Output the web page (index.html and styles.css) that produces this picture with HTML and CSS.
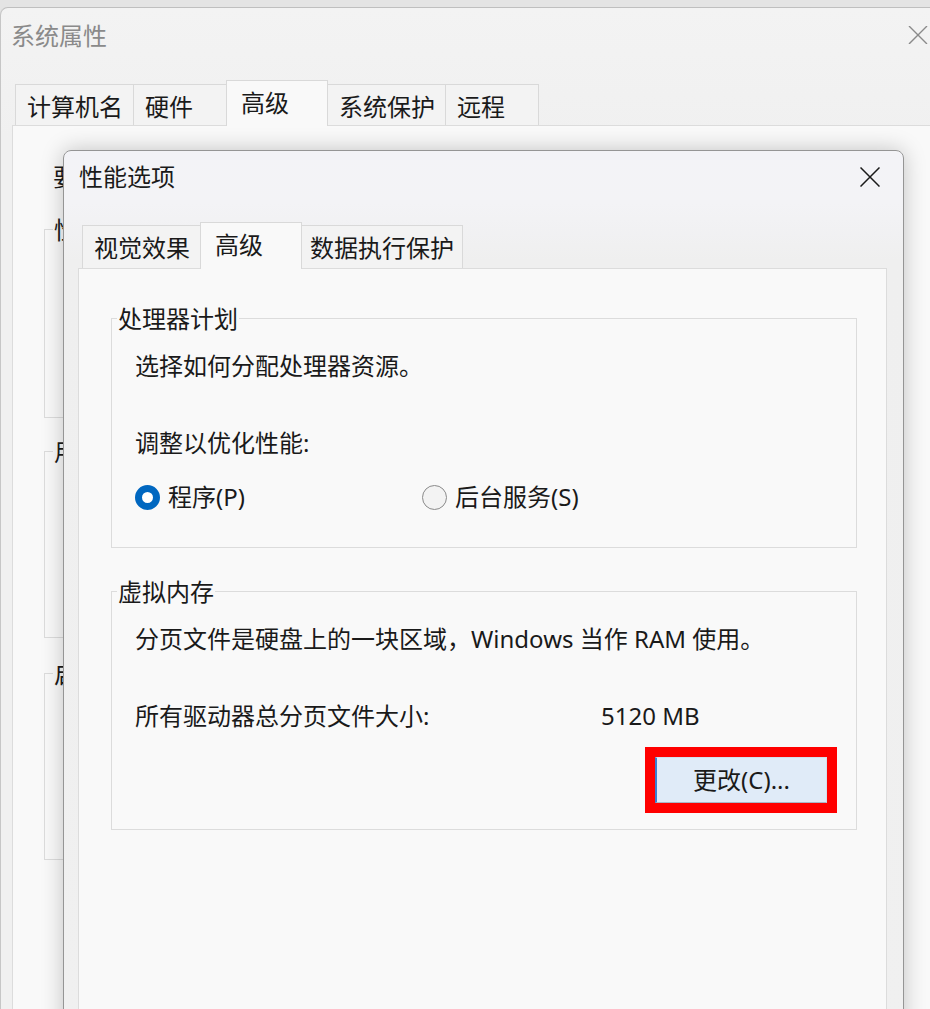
FILE: index.html
```html
<!DOCTYPE html>
<html lang="zh-CN">
<head>
    <meta charset="utf-8">
    <title>性能选项</title>
    <link rel="stylesheet" href="styles.css">
</head>
<body>

<!-- Back window: 系统属性 -->
<div class="window sysprops">
    <div class="titlebar">
        <span class="title">系统属性</span>
        <svg class="close" width="20" height="18" viewBox="0 0 20 18">
            <path d="M1 0 L19 18 M19 0 L1 18" stroke="#8a8a8a" stroke-width="1.4" fill="none"/>
        </svg>
    </div>
    <div class="tabs">
        <div class="tab">计算机名</div>
        <div class="tab">硬件</div>
        <div class="tab active">高级</div>
        <div class="tab">系统保护</div>
        <div class="tab">远程</div>
    </div>
    <div class="panel">
        <div class="note">要进行大多数更改，你必须作为管理员登录。</div>
        <div class="group back-group">
            <span class="group-title">性能</span>
        </div>
        <div class="group back-group">
            <span class="group-title">用户配置文件</span>
        </div>
        <div class="group back-group">
            <span class="group-title">启动和故障恢复</span>
        </div>
    </div>
</div>

<!-- Front dialog: 性能选项 -->
<div class="window perf">
    <div class="titlebar">
        <span class="title">性能选项</span>
        <svg class="close" width="20" height="20" viewBox="0 0 20 20">
            <path d="M0.5 0.5 L19.5 19.5 M19.5 0.5 L0.5 19.5" stroke="#1a1a1a" stroke-width="1.5" fill="none"/>
        </svg>
    </div>
    <div class="tabs">
        <div class="tab">视觉效果</div>
        <div class="tab active">高级</div>
        <div class="tab narrow">数据执行保护</div>
    </div>
    <div class="panel">
        <div class="group cpu">
            <span class="group-title">处理器计划</span>
            <div class="line first">选择如何分配处理器资源。</div>
            <div class="line spaced">调整以优化性能:</div>
            <div class="radios">
                <label class="radio-item">
                    <span class="radio checked"></span>
                    <span>程序(P)</span>
                </label>
                <label class="radio-item">
                    <span class="radio"></span>
                    <span>后台服务(S)</span>
                </label>
            </div>
        </div>

        <div class="group vmem">
            <span class="group-title">虚拟内存</span>
            <div class="line first">分页文件是硬盘上的一块区域，Windows 当作 RAM 使用。</div>
            <div class="line spaced size-row">
                <span class="size-label">所有驱动器总分页文件大小:</span>
                <span>5120 MB</span>
            </div>
            <div class="button-row">
                <button type="button" class="change">更改(C)...</button>
            </div>
        </div>
    </div>
</div>

</body>
</html>
```

FILE: styles.css
```css
/* Base */
* {
    box-sizing: border-box;
}
html, body {
    margin: 0;
}
body {
    position: relative;
    width: 930px;
    height: 1009px;
    overflow: hidden;
    background: #e4e4e4;
    font-family: "Noto Sans", "Noto Sans CJK SC", sans-serif;
    font-size: 24px;
    color: #1a1a1a;
}

/* Window frames */
.window {
    display: flex;
    flex-direction: column;
}
.titlebar {
    display: flex;
    align-items: center;
    justify-content: space-between;
    flex: none;
}
.close {
    display: block;
}

.sysprops {
    margin-top: 7px;
    width: 934px;
    height: 1010px;
    background: linear-gradient(#f3f3f3, #f0f0f0 130px);
    border-top: 1px solid #bfbfbf;
    border-left: 1px solid #c6c6c6;
    border-top-left-radius: 8px;
}
.sysprops .titlebar {
    height: 56px;
    padding: 0 6px 3px 10px;
}
.sysprops .title {
    color: #8a8a8a;
}

.perf {
    position: absolute;
    left: 63px;
    top: 150px;
    width: 841px;
    height: 900px;
    border: 1px solid #959595;
    border-radius: 8px 8px 0 0;
    background: linear-gradient(#f3f3f7, #f3f3f6 52px, #efefef 110px, #f0f0f0);
    box-shadow: 0 0 22px rgba(0, 0, 0, 0.22);
}
.perf .titlebar {
    height: 52px;
    padding: 0 23px 3px 15px;
}
.perf .close {
    margin-top: 3px;
}

/* Tabs */
.tabs {
    display: flex;
    align-items: flex-end;
    flex: none;
}
.tab {
    position: relative;
    min-width: 94px;
    padding: 0 10px 0 11px;
    border: 1px solid #d9d9d9;
    border-bottom: none;
    background: #f3f3f3;
    white-space: nowrap;
}
.tab + .tab {
    margin-left: -1px;
}
.tab.active {
    z-index: 1;
    min-width: 102px;
    padding-left: 14px;
    background: #f9f9f9;
    margin-bottom: -1px;
}
.tab.narrow {
    padding: 0 8px;
}

.sysprops .tabs {
    height: 45px;
    margin: 16px 0 0 14px;
}
.sysprops .tab {
    height: 41px;
    line-height: 43px;
}
.sysprops .tab.active {
    height: 46px;
    line-height: 44px;
}

.perf .tabs {
    height: 46px;
    margin: 19px 0 0 18px;
}
.perf .tab {
    height: 43px;
    line-height: 43px;
}
.perf .tab.active {
    height: 47px;
    line-height: 44px;
}

/* Tab panels */
.panel {
    flex: 1;
    border: 1px solid #dcdcdc;
    background: #f9f9f9;
}
.sysprops .panel {
    margin-left: 11px;
    padding: 35px 0 0 31px;
}
.perf .panel {
    margin: 0 16px 0 14px;
    padding: 0 29px 0 32px;
}

.note {
    line-height: 32px;
    padding-left: 9px;
}

/* Group boxes */
.group {
    border: 1px solid #dcdcdc;
    padding: 0 29px 0 23px;
}
.group-title {
    display: block;
    width: max-content;
    margin: -14px 0 0 -18px;
    padding: 0 1px;
    line-height: 28px;
    background: #f9f9f9;
}

.back-group {
    width: 820px;
    height: 187px;
    padding-left: 8px;
}
.back-group .group-title {
    margin-left: 0;
}
.note + .back-group {
    margin-top: 36px;
    height: 189px;
}
.back-group + .back-group {
    margin-top: 33px;
}
.back-group:last-child {
    margin-top: 35px;
}

.cpu {
    margin-top: 49px;
    padding-bottom: 34px;
}
.vmem {
    margin-top: 43px;
    padding-bottom: 26px;
}

.line {
    line-height: 32px;
}
.line.first {
    margin-top: 17px;
}
.line.spaced {
    margin-top: 45px;
}

/* Radio buttons */
.radios {
    display: flex;
    margin-top: 22px;
    line-height: 32px;
}
.radio-item {
    display: flex;
    align-items: center;
    gap: 8px;
}
.radio-item:first-child {
    width: 287px;
}
.radio {
    width: 25px;
    height: 25px;
    border-radius: 50%;
    border: 1px solid #8a8a8a;
    background: #f3f3f3;
}
.radio.checked {
    border: 7px solid #0067c0;
    background: #fff;
}

/* Page file size */
.size-row {
    display: flex;
}
.size-label {
    width: 466px;
}

.button-row {
    display: flex;
    justify-content: flex-end;
    margin-top: 25px;
}
button.change {
    width: 172px;
    height: 46px;
    padding: 0;
    font: inherit;
    color: #1a1a1a;
    background: #e0ebf8;
    border: 1px solid #d3dfec;
    border-left: 2px solid #3b7fcf;
    border-bottom-color: #a9b6c6;
    outline: 10px solid #ff0000;
    line-height: 44px;
}
```
